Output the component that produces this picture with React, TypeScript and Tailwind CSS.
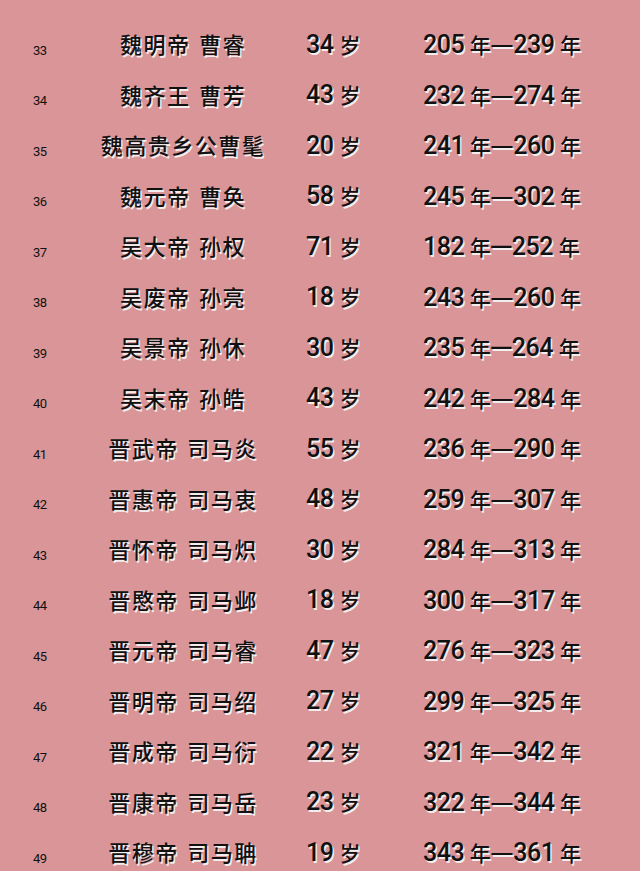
const rows: [string, string, string, string][] = [
  ["33", "魏明帝 曹睿", "34", "205 年—239 年"],
  ["34", "魏齐王 曹芳", "43", "232 年—274 年"],
  ["35", "魏高贵乡公曹髦", "20", "241 年—260 年"],
  ["36", "魏元帝 曹奂", "58", "245 年—302 年"],
  ["37", "吴大帝 孙权", "71", "182 年一252 年"],
  ["38", "吴废帝 孙亮", "18", "243 年—260 年"],
  ["39", "吴景帝 孙休", "30", "235 年一264 年"],
  ["40", "吴末帝 孙皓", "43", "242 年—284 年"],
  ["41", "晋武帝 司马炎", "55", "236 年—290 年"],
  ["42", "晋惠帝 司马衷", "48", "259 年—307 年"],
  ["43", "晋怀帝 司马炽", "30", "284 年—313 年"],
  ["44", "晋愍帝 司马邺", "18", "300 年—317 年"],
  ["45", "晋元帝 司马睿", "47", "276 年—323 年"],
  ["46", "晋明帝 司马绍", "27", "299 年—325 年"],
  ["47", "晋成帝 司马衍", "22", "321 年—342 年"],
  ["48", "晋康帝 司马岳", "23", "322 年—344 年"],
  ["49", "晋穆帝 司马聃", "19", "343 年—361 年"],
];

// CJK glyphs (年, dashes) get their own font so the dash is full width
function Years({ text }: { text: string }) {
  return (
    <>
      {text.split(/(年|—|一)/).map((part, i) => {
        if (part === "年")
          return (
            <span key={i} className="font-['Noto_Sans_CJK_SC',sans-serif] text-[21px] leading-none font-medium">
              年
            </span>
          );
        if (part === "—")
          return (
            <span key={i} className="font-['Noto_Sans_CJK_SC',sans-serif] text-[26px] leading-none">
              —
            </span>
          );
        if (part === "一")
          return (
            <span key={i} className="font-['Noto_Sans_CJK_SC',sans-serif] text-[22px] leading-none font-medium">
              一
            </span>
          );
        return <span key={i}>{part}</span>;
      })}
    </>
  );
}

export default function App() {
  return (
    <div className="min-h-[871px] w-[640px] bg-[#d99597] pt-[20px] text-[#111] [text-shadow:1.5px_1.5px_0_#f3eded] font-['Roboto','Liberation_Sans','Noto_Sans_CJK_SC',sans-serif]">
      {rows.map(([no, name, age, years]) => (
        <div
          key={no}
          className="grid h-[50.5px] grid-cols-[100px_166px_157px_1fr] items-center"
        >
          <span className="mt-[10px] pl-[33px] text-[13px] tracking-[-0.5px] [text-shadow:none]">
            {no}
          </span>
          <span className="-mt-[3px] text-center text-[22px] font-medium font-['Noto_Sans_CJK_SC',serif] tracking-[1.5px] [word-spacing:2px]">
            {name}
          </span>
          <span className="-mt-[1px] pl-[40px] text-[25px] leading-[30px] font-medium tracking-[-0.5px]">
            {age}
            <span className="ml-[6px] font-['Noto_Sans_CJK_SC',sans-serif] text-[21px] leading-none font-medium">
              岁
            </span>
          </span>
          <span className="-mt-[1px] whitespace-nowrap text-[25px] leading-[30px] font-medium tracking-[-0.5px]">
            <Years text={years} />
          </span>
        </div>
      ))}
    </div>
  );
}
